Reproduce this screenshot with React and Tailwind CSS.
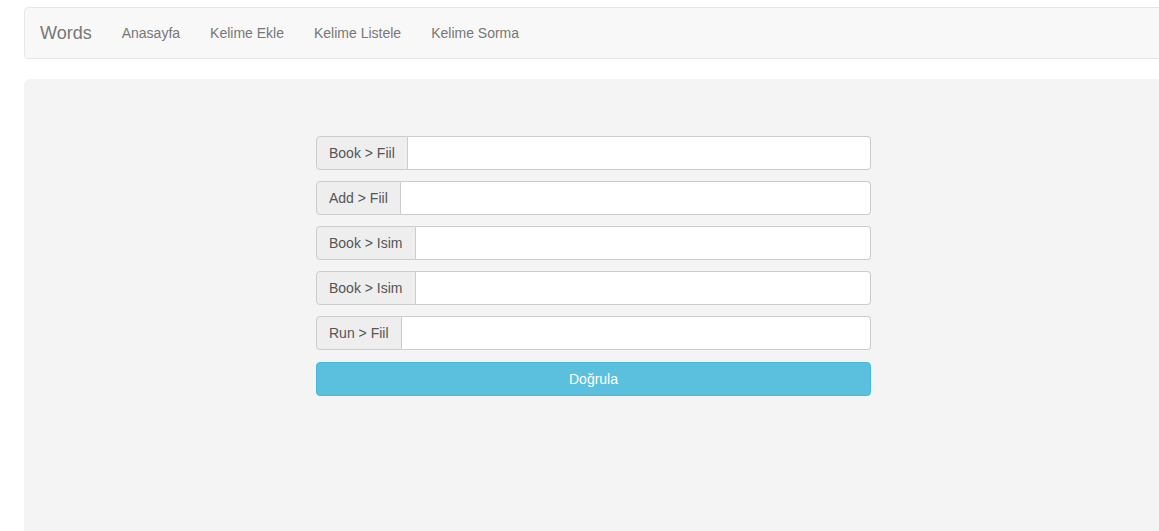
import React from "react";

const rows = ["Book > Fiil", "Add > Fiil", "Book > Isim", "Book > Isim", "Run > Fiil"];

export default function App() {
  return (
    <div
      className="w-screen h-[531px] overflow-hidden bg-white pt-[7px] pl-[24px]"
      style={{ fontFamily: '"Liberation Sans", Arial, sans-serif' }}
    >
      <nav className="w-[1160px] h-[52px] bg-[#f8f8f8] border border-[#e7e7e7] rounded-[4px] flex items-center">
        <span className="px-[15px] text-[18px] leading-[20px] text-[#777777]">Words</span>
        {["Anasayfa", "Kelime Ekle", "Kelime Listele", "Kelime Sorma"].map((t) => (
          <a key={t} className="px-[15px] text-[14px] leading-[20px] text-[#777777]">
            {t}
          </a>
        ))}
      </nav>
      <div className="mt-[20px] w-[1160px] h-[460px] bg-[#f4f4f4] rounded-tl-[6px] pt-[57px] pl-[292px]">
        <div className="w-[555px] flex flex-col gap-[11px]">
          {rows.map((r, i) => (
            <div key={i} className="flex h-[34px]">
              <span className="flex items-center px-[12px] bg-[#eeeeee] border border-[#cccccc] rounded-l-[4px] text-[14px] text-[#555555] whitespace-nowrap">
                {r}
              </span>
              <input
                type="text"
                className="flex-1 min-w-0 bg-white border border-l-0 border-[#cccccc] rounded-r-[4px] outline-none px-[12px] text-[14px]"
              />
            </div>
          ))}
          <button className="mt-[1px] h-[34px] w-full bg-[#5bc0de] border border-[#46b8da] rounded-[4px] text-white text-[14px]">
            Doğrula
          </button>
        </div>
      </div>
    </div>
  );
}
